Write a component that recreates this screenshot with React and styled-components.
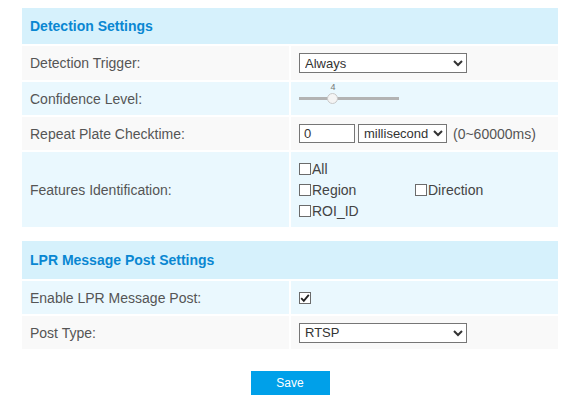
import React, { useState } from "react";
import styled, { createGlobalStyle } from "styled-components";

const GlobalStyle = createGlobalStyle`
  body {
    margin: 0;
    background: #fff;
    font-family: "Liberation Sans", Arial, sans-serif;
  }
`;

const Page = styled.div`
  width: 536px;
  padding: 8px 0 0 22px;
  display: flex;
  flex-direction: column;
  gap: 14px;
`;

const Section = styled.div`
  display: grid;
  grid-template-columns: 1fr 1fr;
  gap: 2px;
`;

const Header = styled.div`
  grid-column: 1 / -1;
  height: ${(p) => p.h || 36}px;
  display: flex;
  align-items: center;
  padding-left: 8px;
  background: #d6f1fc;
  color: #0a87d2;
  font-size: 14px;
  font-weight: bold;
`;

const Label = styled.div`
  height: ${(p) => p.h || 33}px;
  display: flex;
  align-items: center;
  padding-left: 8px;
  background: ${(p) => (p.blue ? "#eaf8fe" : "#f9f9f9")};
  color: #555;
  font-size: 14px;
`;

const Value = styled.div`
  height: ${(p) => p.h || 33}px;
  display: flex;
  align-items: center;
  padding-left: 8px;
  box-sizing: border-box;
  background: ${(p) => (p.blue ? "#eaf8fe" : "#f9f9f9")};
  color: #444;
  font-size: 14px;
`;

const Select = styled.select`
  width: ${(p) => p.w || 168}px;
  height: ${(p) => p.ht || 20}px;
  border: 1px solid #767676;
  border-radius: 0;
  background: #fff;
  color: #333;
  font-family: "Liberation Sans", Arial, sans-serif;
  font-size: 13px;
  padding: 0 0 0 1px;
  margin: 0;
  outline: none;
`;

const TextInput = styled.input`
  width: 56px;
  height: 19px;
  box-sizing: border-box;
  border: 1px solid #767676;
  padding: 0 0 0 4px;
  margin: 0 3px 0 0;
  font-family: "Liberation Sans", Arial, sans-serif;
  font-size: 13px;
  color: #333;
  outline: none;
`;

const Hint = styled.span`
  margin-left: 6px;
  font-size: 14px;
  color: #555;
`;

const SliderWrap = styled.div`
  position: relative;
  width: 100px;
  height: 33px;
`;

const Track = styled.div`
  position: absolute;
  left: 0;
  right: 0;
  top: 15px;
  height: 3px;
  background: #b3b3b3;
`;

const Thumb = styled.div`
  position: absolute;
  top: 11px;
  width: 11px;
  height: 11px;
  margin-left: -6px;
  border-radius: 50%;
  background: #f4f4f4;
  border: 1px solid #c8c8c8;
  box-sizing: border-box;
`;

const ThumbLabel = styled.div`
  position: absolute;
  top: 0;
  width: 20px;
  margin-left: -10px;
  text-align: center;
  font-size: 9px;
  color: #777;
`;

const CheckGrid = styled.div`
  display: grid;
  grid-template-columns: 116px 120px;
  row-gap: 5px;
`;

const CheckItem = styled.label`
  display: flex;
  align-items: center;
  font-size: 14px;
  color: #444;
  line-height: 16px;
  grid-column: ${(p) => p.col || "auto"};
`;

const Box = styled.span`
  width: 12px;
  height: 12px;
  box-sizing: border-box;
  border: 1px solid #6b6b6b;
  background: #fff;
  display: inline-flex;
  align-items: center;
  justify-content: center;
  margin-right: 1px;
`;

const Footer = styled.div`
  display: flex;
  justify-content: center;
  padding-top: 8px;
`;

const SaveButton = styled.button`
  width: 79px;
  height: 24px;
  border: none;
  background: #00a0e9;
  color: #fff;
  font-family: "Liberation Sans", Arial, sans-serif;
  font-size: 12px;
  cursor: pointer;
`;

const Check = ({ checked, label, col, onClick }) => (
  <CheckItem col={col} onClick={onClick}>
    <Box>
      {checked && (
        <svg width="10" height="10" viewBox="0 0 10 10">
          <path d="M1.2 5.2 L3.8 7.8 L8.8 1.8" stroke="#222" strokeWidth="1.8" fill="none" />
        </svg>
      )}
    </Box>
    {label}
  </CheckItem>
);

const App = () => {
  const [flags, setFlags] = useState({ all: false, region: false, direction: false, roi: false });
  const [enable, setEnable] = useState(true);
  const toggle = (k) => setFlags({ ...flags, [k]: !flags[k] });

  return (
    <>
      <GlobalStyle />
      <Page>
        <Section>
          <Header>Detection Settings</Header>
          <Label h={34}>Detection Trigger:</Label>
          <Value h={34}>
            <Select defaultValue="always">
              <option value="always">Always</option>
            </Select>
          </Value>
          <Label blue>Confidence Level:</Label>
          <Value blue>
            <SliderWrap>
              <Track />
              <Thumb style={{ left: "34%" }} />
              <ThumbLabel style={{ left: "34%" }}>4</ThumbLabel>
            </SliderWrap>
          </Value>
          <Label>Repeat Plate Checktime:</Label>
          <Value>
            <TextInput defaultValue="0" />
            <Select w={89} ht={19} defaultValue="ms">
              <option value="ms">millisecond</option>
            </Select>
            <Hint>(0~60000ms)</Hint>
          </Value>
          <Label blue h={75}>Features Identification:</Label>
          <Value blue h={75}>
            <CheckGrid>
              <Check col="1 / -1" label="All" checked={flags.all} onClick={() => toggle("all")} />
              <Check label="Region" checked={flags.region} onClick={() => toggle("region")} />
              <Check label="Direction" checked={flags.direction} onClick={() => toggle("direction")} />
              <Check col="1 / -1" label="ROI_ID" checked={flags.roi} onClick={() => toggle("roi")} />
            </CheckGrid>
          </Value>
        </Section>

        <Section>
          <Header h={38}>LPR Message Post Settings</Header>
          <Label blue>Enable LPR Message Post:</Label>
          <Value blue>
            <Check checked={enable} onClick={() => setEnable(!enable)} />
          </Value>
          <Label>Post Type:</Label>
          <Value>
            <Select defaultValue="rtsp">
              <option value="rtsp">RTSP</option>
            </Select>
          </Value>
        </Section>

        <Footer>
          <SaveButton>Save</SaveButton>
        </Footer>
      </Page>
    </>
  );
};

export default App;
